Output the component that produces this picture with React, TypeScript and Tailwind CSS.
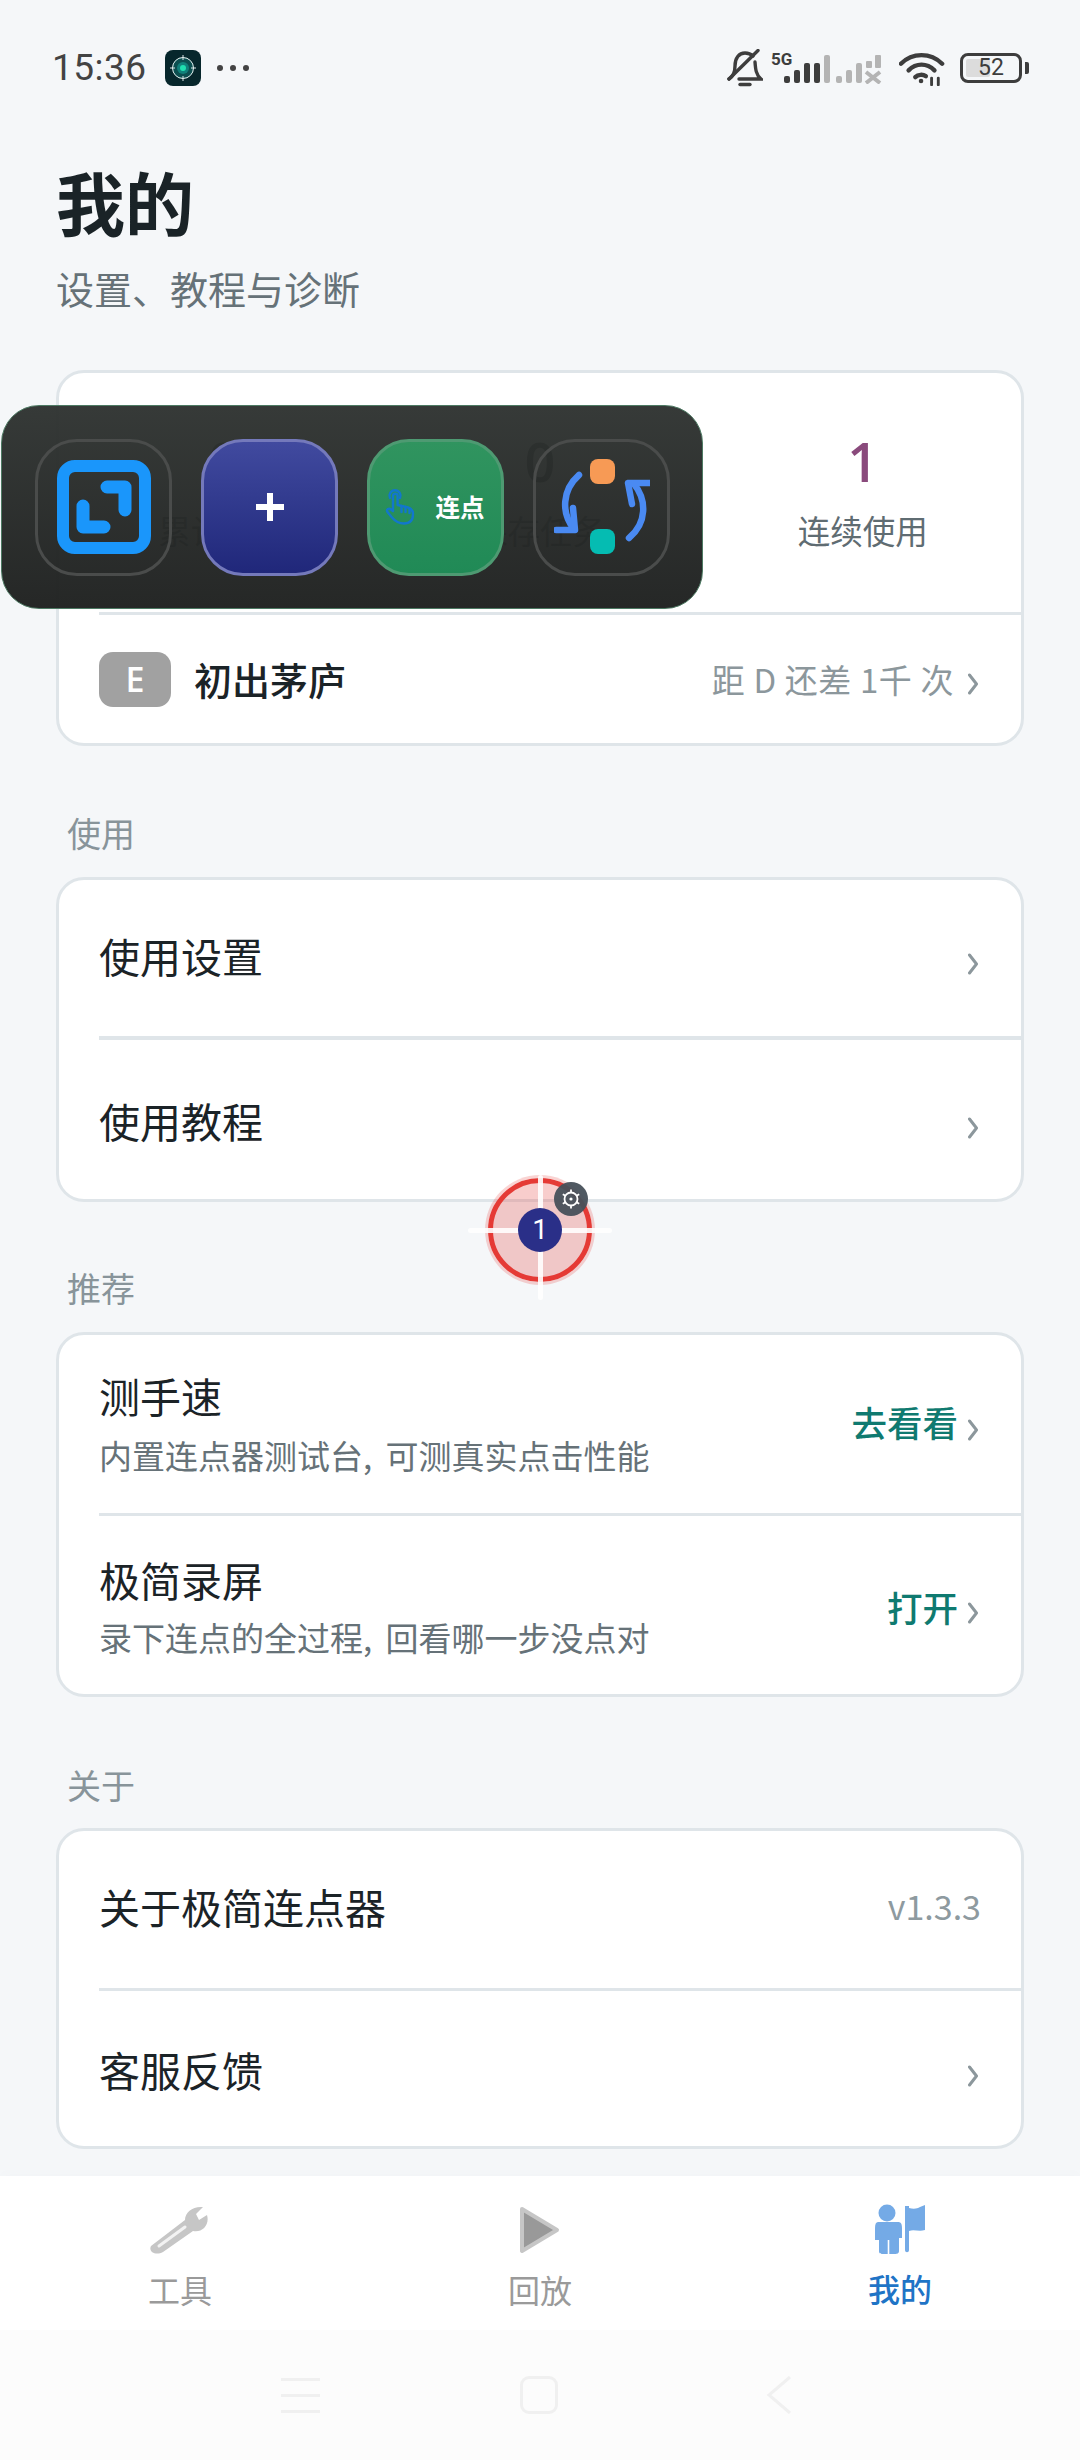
import React from "react";

const Chevron = ({ className = "" }: { className?: string }) => (
  <svg width="12" height="22" viewBox="0 0 12 22" className={className} fill="none">
    <path d="M2.5 2 L9.5 11 L2.5 20" stroke="#8c979c" strokeWidth="3" strokeLinecap="round" strokeLinejoin="round" />
  </svg>
);

const Stat = ({ value, label, color, cls = "" }: { value: string; label: string; color: string; cls?: string }) => (
  <div className={`flex flex-1 flex-col items-center ${cls}`}>
    <div className={`font-['Open_Sans'] text-[54px] leading-[60px] font-semibold ${color}`}>{value}</div>
    <div className="mt-[16px] text-[32.5px] leading-[46px] text-[#5f6c72]">{label}</div>
  </div>
);

const Divider = ({ h = "h-[3px]" }: { h?: string }) => <div className={`ml-[40px] ${h} bg-[#dfe5e9]`} />;

const Card = ({ children }: { children: React.ReactNode }) => (
  <div className="mx-[56px] rounded-[28px] border-[3px] border-[#dfe5e9] bg-white overflow-hidden">{children}</div>
);

const SectionLabel = ({ children, mt }: { children: React.ReactNode; mt: string }) => (
  <div className={`${mt} ml-[67px] h-[48px] text-[34px] leading-[48px] text-[#88949a]`}>{children}</div>
);

const SimpleRow = ({ title, h, right, titleCls, chevronCls }: { title: string; h: string; right?: React.ReactNode; titleCls: string; chevronCls?: string }) => (
  <div className={`flex ${h} items-center justify-between pl-[40px] pr-[40px]`}>
    <div className={`text-[41px] leading-[56px] text-[#1b2327] ${titleCls}`}>{title}</div>
    {right ?? <Chevron className={`mr-[2px] ${chevronCls ?? ""}`} />}
  </div>
);

const RichRow = ({ title, desc1, desc2, action, h, titleGap, titleOffset, actionCls, chevronCls }: { title: string; desc1: string; desc2: string; action: string; h: string; titleGap: string; titleOffset: string; actionCls: string; chevronCls: string }) => (
  <div className={`flex ${h} items-center justify-between pl-[40px] pr-[42px]`}>
    <div className={`flex flex-col ${titleOffset}`}>
      <div className="text-[41px] leading-[56px] text-[#1b2327]">{title}</div>
      <div className={`${titleGap} text-[33px] leading-[48px] text-[#667278] whitespace-nowrap`}>
        {desc1}
        <span className="mr-[6px]">,</span>
        {" "}
        {desc2}
      </div>
    </div>
    <div className="flex items-center">
      <span className={`text-[35.5px] leading-[48px] font-medium text-[#0f7a70] ${actionCls}`}>{action}</span>
      <Chevron className={`ml-[9px] ${chevronCls}`} />
    </div>
  </div>
);

const Signal = ({ dim }: { dim?: boolean }) => {
  const c = dim ? "#b4b4b4" : "#3d3d3d";
  return (
    <svg width="46" height="30" viewBox="0 0 46 30">
      <rect x="0" y="22" width="6" height="7" rx="2" fill={c} />
      <rect x="10" y="16" width="6" height="13" rx="2" fill={c} />
      <rect x="20" y="9" width="6" height="20" rx="2" fill={c} />
      {dim ? (
        <>
          <rect x="30" y="7" width="6" height="7" rx="1" fill={c} />
          <rect x="39" y="1" width="6" height="13" rx="1" fill={c} />
          <path d="M30 18 L44 29 M44 18 L30 29" stroke={c} strokeWidth="4" />
        </>
      ) : (
        <>
          <rect x="30" y="9" width="6" height="20" rx="2" fill={c} />
          <rect x="40" y="1" width="6" height="28" rx="2" fill="#b4b4b4" />
        </>
      )}
    </svg>
  );
};

const StatusBar = () => (
  <div className="flex h-[100px] items-center justify-between pl-[52px] pr-[51px] pt-[36px]">
    <div className="flex items-center">
      <span className="font-['Roboto'] text-[37px] leading-[40px] text-[#434343] tracking-[0.5px]">15:36</span>
      <svg width="36" height="36" viewBox="0 0 36 36" className="ml-[18px]">
        <rect width="36" height="36" rx="8" fill="#07272c" />
        <circle cx="18" cy="18" r="10.5" fill="#0c4f50" stroke="#e8f5f4" strokeWidth="1" />
        <circle cx="18" cy="18" r="6" fill="#11807a" />
        <circle cx="18" cy="18" r="3" fill="#1fe0b0" />
        <path d="M18 5V10M18 26V31M5 18H10M26 18H31" stroke="#dfe9e9" strokeWidth="1" />
      </svg>
      <div className="ml-[16px] flex gap-[7px]">
        <div className="h-[6px] w-[6px] rounded-full bg-[#434343]" />
        <div className="h-[6px] w-[6px] rounded-full bg-[#434343]" />
        <div className="h-[6px] w-[6px] rounded-full bg-[#434343]" />
      </div>
    </div>
    <div className="flex items-center">
      <svg width="36" height="38" viewBox="0 0 36 38" fill="none" stroke="#3d3d3d" strokeWidth="3.4" strokeLinecap="round">
        <path d="M2 30 C7 27 8 23 8 17 C8 9 12 4 18 4 C21 4 24 5 26 7" />
        <path d="M28 13 C28.5 20 29 26 34 30 L12 30" />
        <path d="M2 30 L31 1.5" />
        <path d="M13 35.5 H23" />
      </svg>
      <div className="relative ml-[8px] h-[32px] w-[59px] pl-[13px] pt-[2px]">
        <span className="absolute left-0 top-[-3px] font-['Roboto'] text-[17px] leading-[20px] font-bold text-[#3d3d3d]">5G</span>
        <Signal />
      </div>
      <div className="ml-[6px] mt-[2px]">
        <Signal dim />
      </div>
      <svg width="46" height="35" viewBox="0 0 48 36" className="ml-[17px]" fill="none" stroke="#3d3d3d" strokeWidth="4.6" strokeLinecap="round">
        <path d="M2 13 C14 1 33 1 45 13" />
        <path d="M10 20 C18 12 29 12 37 20" />
        <path d="M17 27 C20 24 25 24 28 26" />
        <circle cx="23" cy="31" r="2.4" fill="#3d3d3d" stroke="none" />
        <path d="M34 28 V35 M41 28 V35" strokeWidth="3" />
      </svg>
      <div className="ml-[15px] flex items-center">
        <div className="relative flex h-[30px] w-[62px] items-center justify-center rounded-[8px] border-[3px] border-[#3d3d3d] bg-[#f5f7f9]">
          <div className="absolute left-[3px] top-[3px] h-[18px] w-[24px] rounded-[2px] bg-[#dcdcdc]" />
          <span className="relative font-['Roboto'] text-[23px] leading-[24px] text-[#3d3d3d]">52</span>
        </div>
        <div className="ml-[3px] h-[12px] w-[4px] rounded-r-[2px] bg-[#3d3d3d]" />
      </div>
    </div>
  </div>
);

const Tool = ({ children, className }: { children: React.ReactNode; className: string }) => (
  <div className={`flex h-[137px] w-[137px] items-center justify-center rounded-[42px] border-[3px] ${className}`}>{children}</div>
);

const FloatingPanel = () => (
  <div className="absolute left-[1px] top-[405px] flex h-[204px] w-[702px] items-center gap-[29px] rounded-[38px] border border-[#4d7a63] bg-gradient-to-b from-[#303432]/97 to-[#1f2120]/97 pl-[33px]">
    <Tool className="border-[#4a4c4b]">
      <svg width="94" height="94" viewBox="0 0 94 94" fill="none">
        <rect x="6" y="6" width="82" height="82" rx="12" stroke="#1a96fb" strokeWidth="12" />
        <path d="M50 27 H68 V50" stroke="#1a96fb" strokeWidth="13" strokeLinecap="round" strokeLinejoin="round" />
        <path d="M26 46 V67 H47" stroke="#1a96fb" strokeWidth="13" strokeLinecap="round" strokeLinejoin="round" />
      </svg>
    </Tool>
    <Tool className="border-[#7479bb] bg-gradient-to-b from-[#414a9f] to-[#20277a]">
      <svg width="34" height="34" viewBox="0 0 34 34">
        <path d="M17 3 V31 M3 17 H31" stroke="#ffffff" strokeWidth="6" />
      </svg>
    </Tool>
    <Tool className="border-[#4e9a72] bg-gradient-to-b from-[#30945f] to-[#208a56]">
      <div className="flex items-center pr-[2px]">
        <svg width="30" height="36" viewBox="0 0 30 36" fill="none" stroke="#1277cc" strokeWidth="2.4" strokeLinecap="round" strokeLinejoin="round">
          <path d="M5 9 A5.5 5.5 0 1 1 15 9" />
          <path d="M8 22 V7 A2.3 2.3 0 0 1 12.6 7 V16 L23 18.5 C26.5 19.5 28 22 28 25 C28 31 25 34.5 19 34.5 C13 34.5 10 32 7 28.5 L2.5 23 C1 20.5 4 18.5 6 20.5 Z" />
          <path d="M16.5 17V23M20.5 18V23M24.5 19.5V24" />
        </svg>
        <span className="ml-[21px] text-[24.5px] leading-[34px] font-bold text-white">连点</span>
      </div>
    </Tool>
    <Tool className="border-[#4a4c4b]">
      <svg width="96" height="98" viewBox="0 0 96 98" fill="none">
        <rect x="36" y="1" width="25" height="25" rx="8" fill="#f79a55" />
        <rect x="36" y="71" width="25" height="25" rx="8" fill="#05bcb2" />
        <path d="M25 17 C8 32 7 55 20 71" stroke="#4a8af2" strokeWidth="6.5" strokeLinecap="round" />
        <path d="M19 50 L21 72 L2 72" stroke="#4a8af2" strokeWidth="6.5" strokeLinecap="round" strokeLinejoin="round" />
        <path d="M75 80 C93 65 93 42 80 26" stroke="#4a8af2" strokeWidth="6.5" strokeLinecap="round" />
        <path d="M78 46 L74 25 L95 25" stroke="#4a8af2" strokeWidth="6.5" strokeLinecap="round" strokeLinejoin="round" />
      </svg>
    </Tool>
  </div>
);

const TargetMarker = () => (
  <div className="absolute left-[468px] top-[1158px] h-[144px] w-[144px]">
    <div className="absolute left-[20px] top-[20px] h-[104px] w-[104px] rounded-full border-[5px] border-[#e53a35] bg-[#e53935]/25 shadow-[0_0_0_3px_rgba(229,57,53,0.22)]" />
    <div className="absolute left-0 top-[69.5px] h-[5px] w-[144px] rounded-full bg-white/90" />
    <div className="absolute left-[69.5px] top-[17px] h-[125px] w-[5px] rounded-full bg-white/90" />
    <div className="absolute left-[50px] top-[50px] flex h-[44px] w-[44px] items-center justify-center rounded-full bg-[#2a2f88] font-['Roboto'] text-[28px] text-white">1</div>
    <div className="absolute left-[86px] top-[24px] flex h-[34px] w-[34px] items-center justify-center rounded-full bg-[#47505a]/95">
      <svg width="22" height="22" viewBox="0 0 22 22" fill="none" stroke="#ffffff" strokeWidth="1.8">
        <circle cx="11" cy="11" r="6.5" />
        <circle cx="11" cy="11" r="1.6" fill="#ffffff" stroke="none" />
        <path d="M11 1.5V4.5M11 17.5V20.5M2.8 6.2L5.4 7.8M16.6 14.2L19.2 15.8M2.8 15.8L5.4 14.2M16.6 7.8L19.2 6.2" />
      </svg>
    </div>
  </div>
);

const TabBar = () => (
  <div className="mt-auto bg-white shadow-[0_-4px_10px_rgba(0,0,0,0.012)]">
    <div className="flex h-[154px] bg-white">
      <div className="flex flex-1 flex-col items-center pt-[30px]">
        <svg width="62" height="48" viewBox="0 0 62 48" fill="none">
          <path d="M2 40 L36 14 C36 6 44 0 54 1 L47 8 L50 14 L58 9 C61 19 53 27 44 25 L14 46 C7 50 -1 46 2 40 Z" fill="#c6c6c6" />
          <path d="M10 40 L36 21" stroke="#f2f2f2" strokeWidth="3" strokeLinecap="round" />
        </svg>
        <div className="mt-[17px] text-[32px] leading-[36px] text-[#9a9a9a]">工具</div>
      </div>
      <div className="flex flex-1 flex-col items-center pt-[30px]">
        <svg width="42" height="48" viewBox="0 0 42 48">
          <path d="M3 3 L38 24 L3 45 Z" fill="#999999" stroke="#c6c6c6" strokeWidth="4" strokeLinejoin="round" />
        </svg>
        <div className="mt-[17px] text-[32px] leading-[36px] text-[#9a9a9a]">回放</div>
      </div>
      <div className="flex flex-1 flex-col items-center pt-[28px]">
        <svg width="52" height="50" viewBox="0 0 52 50" fill="#74aae6">
          <circle cx="13" cy="9" r="8.5" />
          <path d="M4 18 H24 C27 18 28 20 28 24 V34 H25 V47 C25 50 22 50 20 50 H10 C7 50 5 50 5 47 V36 H1 V24 C1 20 2 18 4 18 Z" />
          <path d="M14.5 36 V50" stroke="#ffffff" strokeWidth="1.6" />
          <path d="M31 2 H35 V4 C39 5 43 5 46 3 L51 1 V26 C45 28 40 25 35 27 V46 C35 49 31 49 31 46 Z" />
        </svg>
        <div className="mt-[16px] text-[32px] leading-[36px] font-medium text-[#1f74c6]">我的</div>
      </div>
    </div>
    <div className="flex h-[130px] items-center justify-center bg-[#fcfcfc] pr-[7px]">
      <div className="flex flex-col gap-[13px]">
        <div className="h-[3px] w-[39px] bg-[#f0f0f0]" />
        <div className="h-[3px] w-[39px] bg-[#f0f0f0]" />
        <div className="h-[3px] w-[39px] bg-[#f0f0f0]" />
      </div>
      <div className="ml-[200px] h-[38px] w-[38px] rounded-[9px] border-[3px] border-[#f0f0f0]" />
      <svg width="26" height="38" viewBox="0 0 26 38" fill="none" className="ml-[208px]">
        <path d="M24 1 L3 19 L24 37" stroke="#f0f0f0" strokeWidth="3" />
      </svg>
    </div>
  </div>
);

export default function App() {
  return (
    <div className="relative flex h-[2460px] w-[1080px] flex-col overflow-hidden bg-[#f5f7f9] font-['Noto_Sans_CJK_SC',sans-serif]">
      <StatusBar />
      <div className="ml-[56px] mt-[62px] text-[69px] leading-[78px] font-bold text-[#1a2327]">我的</div>
      <div className="ml-[56px] mt-[19px] text-[38px] leading-[58px] text-[#667278]">设置、教程与诊断</div>
      <div className="h-[53px] shrink-0" />
      <Card>
        <div className="flex h-[239px] items-center pb-[2px] pl-[6px]">
          <Stat value="0" label="累计连点" color="text-[#1b2327]" />
          <Stat value="0" label="保存任务" color="text-[#1b2327]" />
          <Stat value="1" label="连续使用" color="text-[#8a4a7c]" cls="pl-[6px]" />
        </div>
        <Divider />
        <div className="flex h-[128px] items-center justify-between pl-[40px] pr-[42px]">
          <div className="flex items-center">
            <div className="flex h-[55px] w-[72px] items-center justify-center rounded-[14px] bg-[#a1a1a1] font-['Open_Sans'] text-[34px] leading-[40px] font-semibold text-white">E</div>
            <div className="ml-[23px] text-[38px] leading-[54px] font-medium text-[#1b2327]">初出茅庐</div>
          </div>
          <div className="flex items-center">
            <span className="text-[33px] leading-[46px] tracking-[0.6px] text-[#8c979c] whitespace-pre">距 D 还差 1千 次</span>
            <Chevron className="ml-[13px] mt-[10px]" />
          </div>
        </div>
      </Card>
      <SectionLabel mt="mt-[63px]">使用</SectionLabel>
      <div className="h-[20px] shrink-0" />
      <Card>
        <SimpleRow title="使用设置" h="h-[156px]" titleCls="mb-[6px]" chevronCls="mt-[12px]" />
        <Divider h="h-[4px]" />
        <SimpleRow title="使用教程" h="h-[159px]" titleCls="" chevronCls="mt-[16px]" />
      </Card>
      <SectionLabel mt="mt-[62px]">推荐</SectionLabel>
      <div className="h-[20px] shrink-0" />
      <Card>
        <RichRow title="测手速" desc1="内置连点器测试台" desc2="可测真实点击性能" action="去看看" h="h-[178px]" titleGap="mt-[8px]" titleOffset="mt-[-2px]" actionCls="mb-[4px]" chevronCls="mt-[12px]" />
        <Divider />
        <RichRow title="极简录屏" desc1="录下连点的全过程" desc2="回看哪一步没点对" action="打开" h="h-[178px]" titleGap="mt-[6px]" titleOffset="mt-[2px]" actionCls="mt-[4px]" chevronCls="mt-[16px]" />
      </Card>
      <SectionLabel mt="mt-[64px]">关于</SectionLabel>
      <div className="h-[19px] shrink-0" />
      <Card>
        <SimpleRow
          title="关于极简连点器"
          h="h-[157px]"
          titleCls="mb-[8px]"
          right={<span className="mb-[8px] text-[34px] leading-[48px] text-[#8e9a9f]">v1.3.3</span>}
        />
        <Divider />
        <SimpleRow title="客服反馈" h="h-[155px]" titleCls="" chevronCls="mt-[14px]" />
      </Card>
      <TabBar />
      <FloatingPanel />
      <TargetMarker />
    </div>
  );
}
